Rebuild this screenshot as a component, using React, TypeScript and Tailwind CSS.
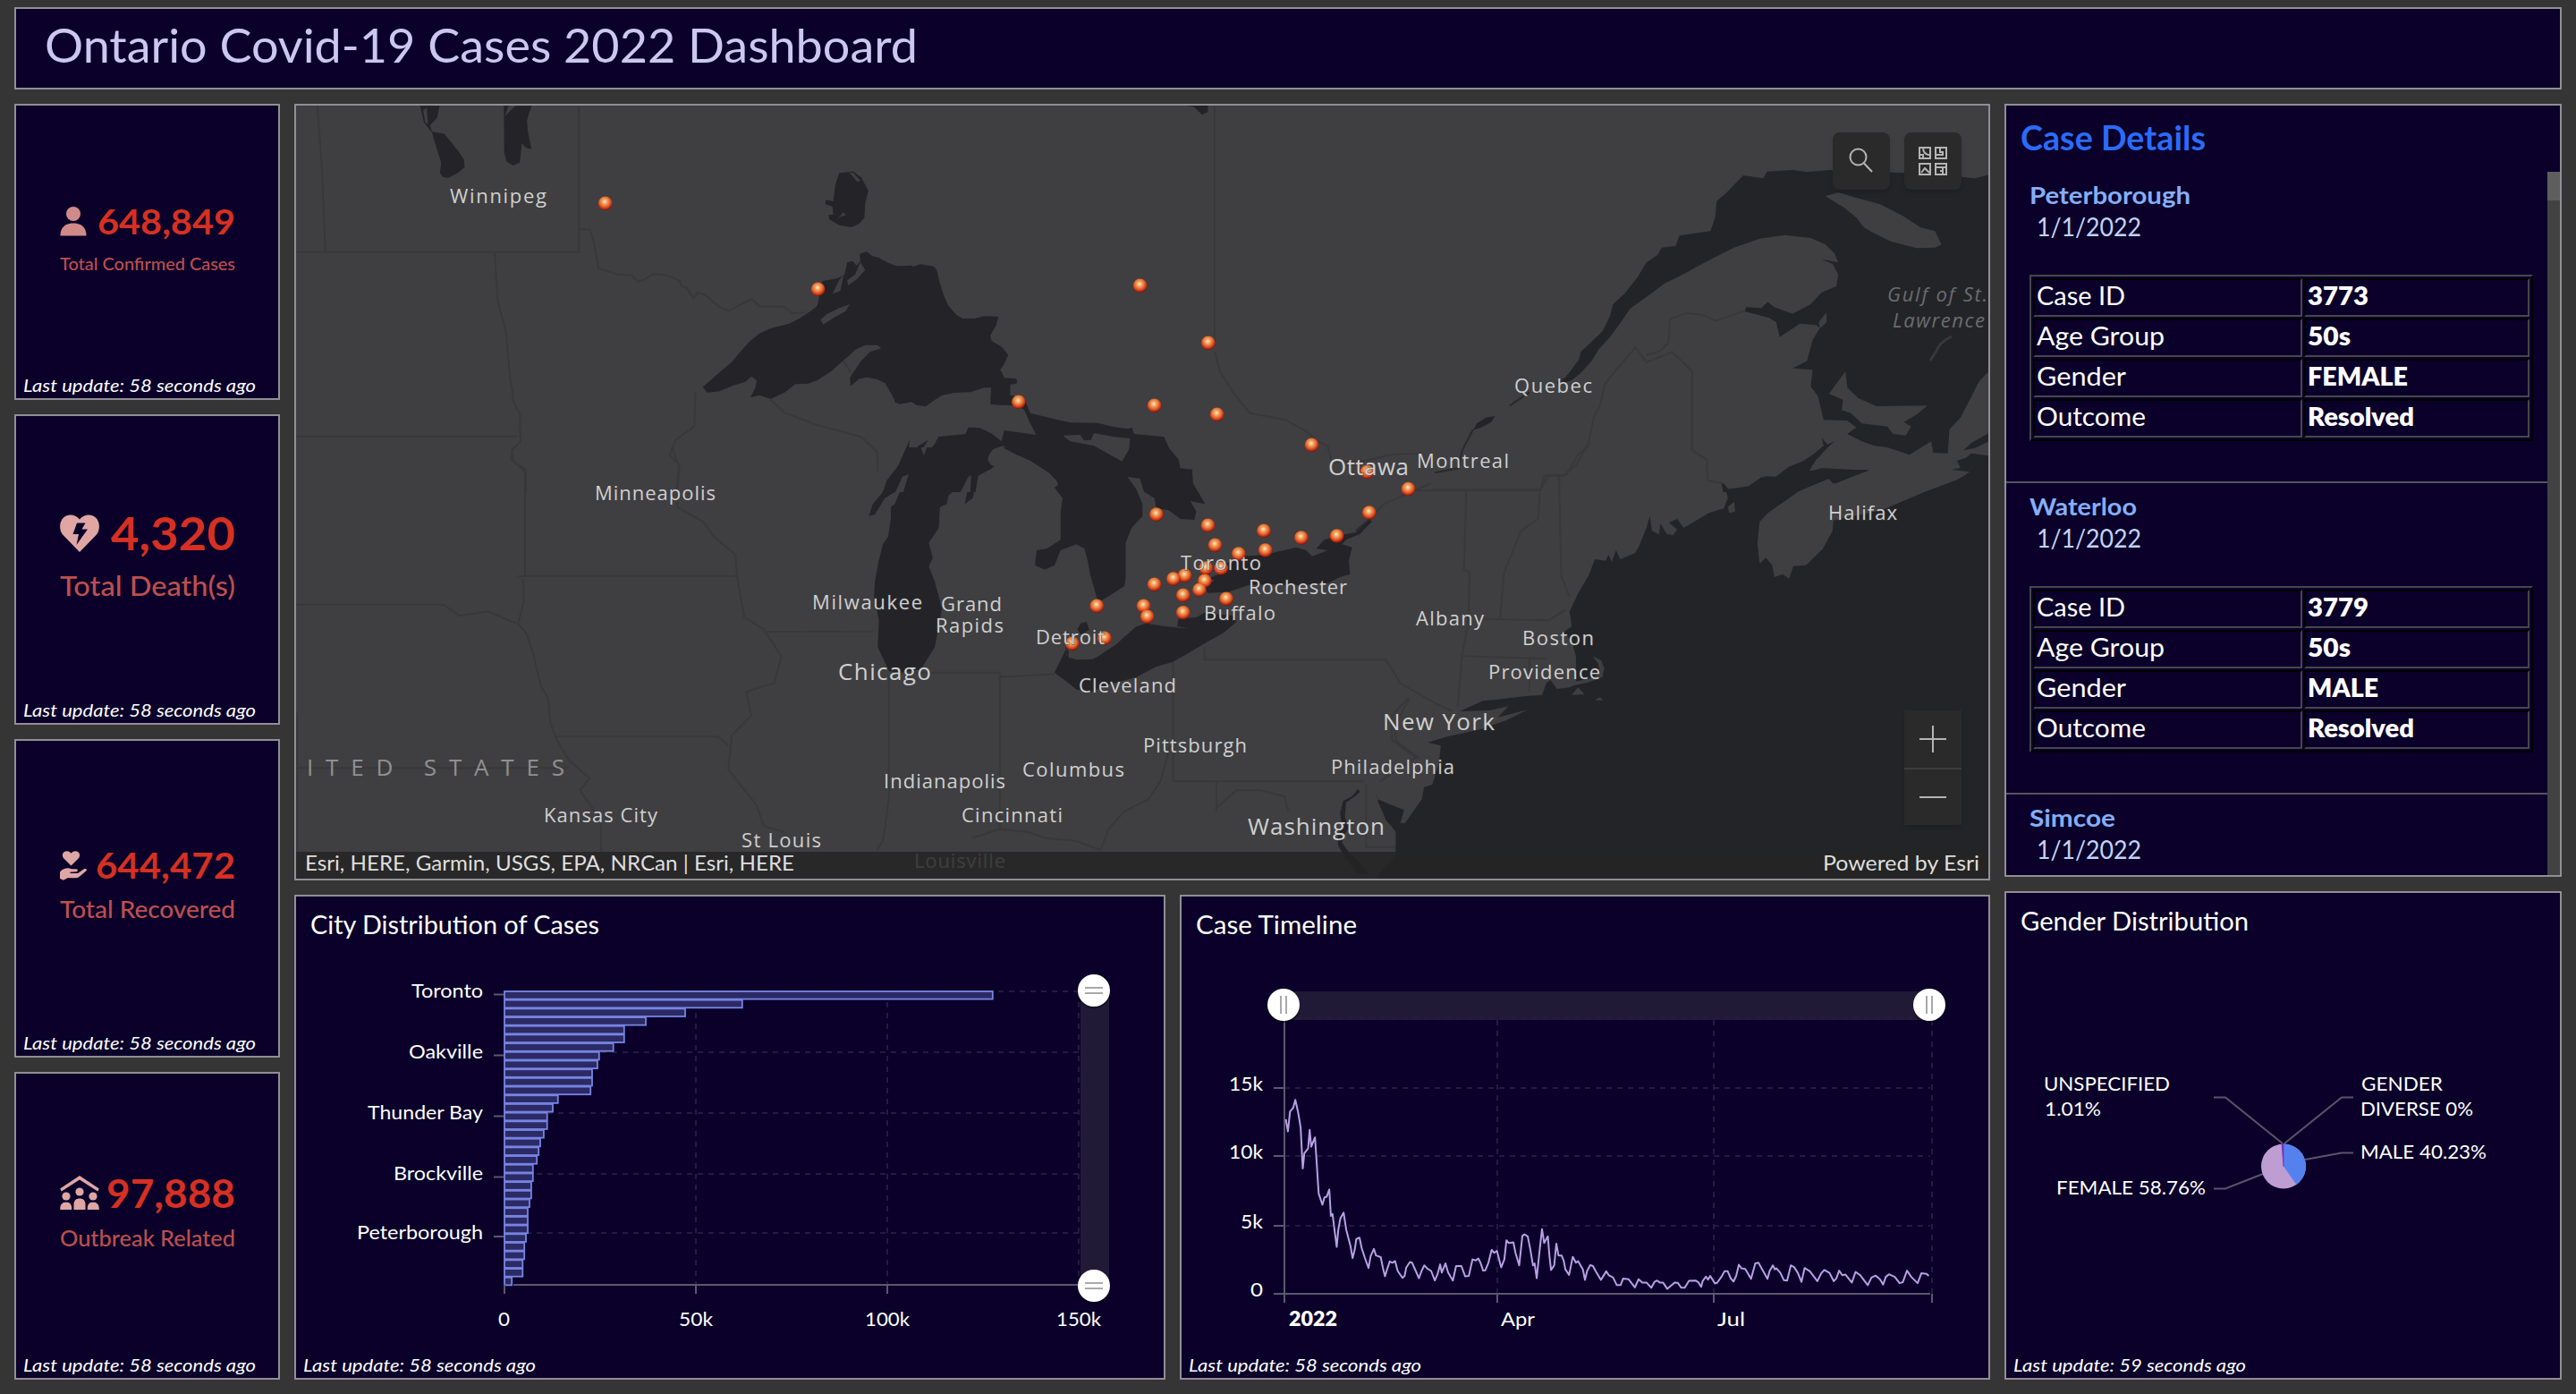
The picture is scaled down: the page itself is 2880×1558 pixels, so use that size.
import { useLayoutEffect, useRef } from "react";
import type { ReactNode } from "react";

/* ---------- text helpers ---------- */

/** A line of text widened or narrowed so that it spans `width` pixels. */
function FitText({ width, className = "", children }: { width: number; className?: string; children: string }) {
  const ref = useRef<HTMLSpanElement>(null);
  useLayoutEffect(() => {
    const el = ref.current;
    if (!el) return;
    el.style.transform = "none";
    const natural = el.getBoundingClientRect().width;
    el.style.transform = `scaleX(${width / natural})`;
  }, [width, children]);
  return (
    <span className="inline-block align-top whitespace-pre" style={{ width }}>
      <span ref={ref} className={`inline-block origin-left align-top ${className}`}>
        {children}
      </span>
    </span>
  );
}

function LastUpdate({ seconds, className = "" }: { seconds: number; className?: string }) {
  return (
    <div className={`mt-auto h-[27px] text-[20px] leading-6 text-white italic ${className}`}>
      <FitText width={260}>{`Last update: ${seconds} seconds ago`}</FitText>
    </div>
  );
}

function Panel({ className = "", children }: { className?: string; children: ReactNode }) {
  return (
    <section className={`flex flex-col overflow-hidden border-2 border-[#918e94] bg-[#0a002a] ${className}`}>
      {children}
    </section>
  );
}

/* ---------- indicators ---------- */

function PersonIcon() {
  return (
    <svg viewBox="0 0 30 33" className="h-[33px] w-[30px] fill-[#d08b88]">
      <circle cx="15" cy="8" r="8" />
      <path d="M0.5 32.5C0.5 23 6 18.5 15 18.5S29.500 23 29.500 32.500Z" />
    </svg>
  );
}

function BrokenHeartIcon() {
  return (
    <svg viewBox="0 0 44 42" className="h-[42px] w-[44px]">
      <path
        className="fill-[#dfa6a4]"
        d="M22 42L3.500 23C-1.300 17.500-.9 8 4 3.500C9-1.200 17-.6 22 5.500C27-.6 35-1.200 40 3.500C44.900 8 45.300 17.500 40.500 23Z"
      />
      <path className="fill-[#0a002a]" d="M19 9.500H28.500L24.500 16.500H31L18.500 34L21 22H14.500Z" />
    </svg>
  );
}

function HandHeartIcon() {
  return (
    <svg viewBox="0 0 30 33" className="h-[33px] w-[30px] fill-[#dfa6a4]">
      <path d="M12.500 16.500L4.400 8.600C2.300 6.300 2.500 2.800 4.600 1.200C7-.6 10.300-.1 12.500 2.600C14.700-.1 18-.6 20.400 1.200C22.500 2.800 22.700 6.300 20.600 8.600Z" />
      <path d="M0 23.500C4 19.500 8.500 18.300 13 20.200H18.500C20.300 20.400 20.200 22.900 18.500 23.200L11.500 23.800V25H20L26.500 20.500C28.500 19.300 30.800 20.500 29.500 22.300L21.500 29C20.300 30 19 30.300 17.500 30.300H8.500L4 32.800L0 31Z" />
    </svg>
  );
}

function PeopleRoofIcon() {
  return (
    <svg viewBox="0 0 44 38" className="h-[38px] w-11 fill-[#dfa6a4]">
      <path d="M22 0L43.800 14.500L42.300 17.500L22 4.600L1.700 17.500L.2 14.500Z" />
      <circle cx="7" cy="23" r="4.600" />
      <circle cx="22" cy="18" r="4.600" />
      <circle cx="37" cy="23" r="4.600" />
      <path d="M.3 38V35.500C.8 31.500 3 29.700 7 29.700S12.700 31.500 13.200 35.500V38ZM15.500 38V31.500C16 27.500 18 25.500 22 25.500S28 27.500 28.500 31.500V38ZM30.800 38V35.500C31.300 31.500 33 29.700 37 29.700S43.200 31.500 43.700 35.500V38Z" />
    </svg>
  );
}

const indicators = [
  {
    value: "648,849",
    label: "Total Confirmed Cases",
    valueWidth: 154,
    icon: <PersonIcon />,
    card: "h-[331px] pt-[109px]",
    valueClass: "text-[38px] leading-10",
    labelClass: "mt-4 text-[18.500px] leading-6",
  },
  {
    value: "4,320",
    label: "Total Death(s)",
    valueWidth: 139,
    icon: <BrokenHeartIcon />,
    card: "h-[347px] pt-[105px]",
    valueClass: "text-[51px] leading-[52px]",
    labelClass: "mt-3.5 text-[30px] leading-9",
  },
  {
    value: "644,472",
    label: "Total Recovered",
    valueWidth: 156,
    icon: <HandHeartIcon />,
    card: "h-[356px] pt-[117px]",
    valueClass: "text-[41px] leading-[44px]",
    labelClass: "mt-[11px] text-[27px] leading-8",
  },
  {
    value: "97,888",
    label: "Outbreak Related",
    valueWidth: 144,
    icon: <PeopleRoofIcon />,
    card: "h-[344px] pt-[109px]",
    valueClass: "text-[44px] leading-[48px]",
    labelClass: "mt-2.5 text-[25px] leading-8",
  },
];

function Indicators() {
  return (
    <div className="flex w-[297px] flex-col gap-4">
      {indicators.map((it) => (
        <Panel key={it.label} className={it.card}>
          <div className="ml-[49px] w-[196px]">
            <div className={`flex items-center justify-between font-bold text-[#d63022] ${it.valueClass}`}>
              {it.icon}
              <FitText width={it.valueWidth}>{it.value}</FitText>
            </div>
            <div className={`font-medium text-[#bd4f4f] ${it.labelClass}`}>
              <FitText width={196}>{it.label}</FitText>
            </div>
          </div>
          <LastUpdate seconds={58} className="pl-2" />
        </Panel>
      ))}
    </div>
  );
}

/* ---------- map ---------- */

const WEST = "translate(320 110) scale(.44643 .33333)";
const NORTH = "translate(1000 110) scale(.44643 .33333)";
const EAST = "translate(1600 110) scale(.40816 .33333)";
const LAKES = "translate(900 500) scale(.44643 .33333)";
const COAST = "translate(1500 500) scale(.47193 .33333)";
const PLAINS = "translate(320 500) scale(.39541 .33333)";

const water: { at: string; d: string; sea?: boolean }[] = [
  { at: WEST, d: "M335 25L345 80L365 115L375 160L388 215L385 250L392 263L405 267L430 250L447 230L445 205L430 175L415 150L395 118L365 112L360 90L378 65L384 25Z" },
  { at: WEST, d: "M545 25H615L608 50L603 75L605 110L614 170L600 165L590 150L585 215L568 225L552 212L546 180Z" },
  { at: WEST, d: "M1385 250L1420 245L1440 265L1458 310L1450 350L1448 400L1435 420L1415 432L1385 425L1360 405L1358 390L1370 390L1368 362L1350 355L1352 340L1370 345L1375 290Z" },
  { at: WEST, d: "M1043 968L1075 930L1115 885L1140 845L1160 815L1185 788L1215 770L1260 755L1285 738L1315 712L1330 695L1335 665L1320 645L1345 612L1382 603L1398 590L1405 550L1418 545L1428 560L1438 545L1436 522L1453 513L1467 528L1485 535L1505 550L1530 563L1568 560V1017L1550 1022L1527 1020L1515 990L1500 955L1480 942L1455 935L1435 940L1413 965L1412 935L1425 910L1440 880L1462 850L1490 838L1480 827L1450 827L1425 843L1410 862L1390 885L1365 915L1330 945L1305 957L1275 958L1250 985L1213 1008L1185 995L1162 1003L1175 970L1178 945L1165 932L1150 950L1120 962L1085 982L1055 986Z" },
  { at: NORTH, d: "M0 560L40 567L65 556L98 563L106 575L112 610L122 655L135 695L155 725L170 738L200 738L225 730L260 731L255 760L240 795L243 812L270 835L285 860L275 890L265 910L275 937L305 940L308 955L290 960L290 995L325 1005L340 1055L400 1075L440 1087L510 1088L545 1100L585 1108L595 1103L600 1125L675 1135L690 1180L710 1210L715 1240L735 1262L745 1240L748 1290L760 1320H625L615 1275L580 1268L595 1300L605 1320H420L405 1280L380 1245L335 1210L325 1190L270 1165L240 1180L233 1210L245 1240L210 1265L203 1320H-30L0 1260L38 1145L35 1200L60 1165L85 1145L70 1175L78 1195L100 1160L110 1135L140 1130L178 1125L185 1103L215 1105L245 1125L268 1150L275 1113L355 1128L340 1090L325 1045L310 1030L265 1028L240 1025L242 970L225 970L190 985L150 987L120 995L100 1012L78 1033L55 1028L40 1015L15 1025L0 1018Z" },
  { at: NORTH, d: "M718 22L750 28L770 55L785 45V22Z" },
  { at: LAKES, d: "M258 0L240 50L205 110L195 150L170 190L160 230L175 225L200 170L225 150L240 100L262 90L240 140L225 190L215 200V240L208 300L195 325L183 390L175 450L173 500L185 580L182 670L200 720L210 750L240 755L290 745L325 670L335 600L343 540L325 450L310 400L320 370L310 320L335 270L338 200L355 190L360 160L400 120L430 85L475 65L455 50L460 25L475 0Z" },
  { at: LAKES, d: "M418 85L426 130L420 170L400 190L408 140Z" },
  { at: LAKES, d: "M495 0L530 25L565 45L605 80L645 115L625 135L645 170L640 220V310L605 340L580 345L576 395L600 410L625 395L640 345L680 325L700 340L708 380L715 430L730 500L735 520L765 495L800 465L803 440V320L818 270L845 230V190L830 140L805 95L845 100L850 150L875 170L880 205L910 210L940 240L975 243L980 215L965 180L1002 190L985 150L965 125L970 75L940 70L935 40L910 0H820L800 45L760 35L700 0Z" },
  { at: LAKES, d: "M705 585L712 612L690 628L682 610L690 590Z" },
  { at: LAKES, d: "M652 680H660V705L680 712L720 710L735 700L780 660L800 635L830 600L855 590L900 600L965 608L932 600L935 575L980 570L1000 555L1075 565L1080 585L1050 620L1010 650L960 690L920 720L880 735L830 770L790 785L760 795L720 820L680 812L650 780L625 755Z" },
  { at: LAKES, d: "M1010 440L1035 425L1060 385L1100 365L1150 360L1200 345L1230 335L1255 345L1270 365L1310 345L1280 340L1300 310L1340 295L1380 285L1412 240L1420 248L1390 290L1355 310L1345 325L1370 335L1362 380L1365 425L1340 435L1310 455L1250 462L1150 460L1110 462L1060 485L1010 488L998 475L1025 445Z" },
  { at: LAKES, d: "M1385 1145L1390 1155L1378 1170L1355 1190L1352 1240L1362 1275L1350 1300L1345 1325L1358 1350L1385 1385L1410 1430H1385L1355 1380L1335 1335V1300L1345 1270L1340 1225L1348 1185L1370 1170Z" },
  { at: LAKES, d: "M1425 1145L1435 1180L1460 1195L1500 1215L1492 1255L1482 1290L1455 1250L1440 1200Z" },
  { at: EAST, sea: true, d: "M378 920L405 875L410 850L440 815L470 780L490 730L498 690L530 655L565 600L590 550L620 525L632 500L670 495L680 460L765 445L778 400L782 345L810 315L855 258L910 268L920 245L990 240L1030 247L1090 240L1300 250L1440 262L1490 268L1530 255V912L1500 950L1480 1000L1450 1070L1420 1110L1415 1190L1375 1188L1370 1150L1310 1195L1250 1170L1215 1165L1180 1150L1140 1125L1165 1103L1140 1080L1075 1078L1060 1000L1040 965L1045 910L990 905L1030 880L1045 810L1065 770L1055 760L1010 755L955 800L945 750L925 735L860 715L862 700L905 703L922 682L940 700L990 722L1040 690L1070 650L1110 630L1115 590L1100 555L1070 540L1115 550L1105 520L1080 490L1040 468L970 458L900 470L830 500L750 550L690 590L640 620L590 665L545 705L520 750L490 800L460 840L440 880L410 920L385 945L350 960Z" },
  { at: EAST, sea: true, d: "M800 1320L795 1288L815 1310L870 1300L905 1270L940 1272L980 1235L1020 1215L1050 1190L1075 1165L1070 1138L1085 1160L1105 1150L1060 1200L1035 1250L1070 1240L1200 1247L1160 1265L1110 1290L1090 1275L1040 1300L1000 1320Z" },
  { at: EAST, sea: true, d: "M1530 1198L1480 1190L1465 1205L1440 1215L1450 1238L1425 1245L1475 1252L1450 1275L1400 1300L1365 1320H1530Z" },
  { at: EAST, sea: true, d: "M1530 1120L1480 1155L1458 1180L1490 1172L1530 1148Z" },
  { at: EAST, d: "M115 1112L125 1090L150 1070L175 1065L165 1085L135 1105Z" },
  { at: COAST, sea: true, d: "M905 118L915 170L905 205L870 220L840 245L810 270L795 240L775 252L795 275L785 295L770 290L755 255L752 292L735 280L730 230L722 270L705 330L695 355L660 375L650 345L640 385L632 360L625 380L600 375L585 430L560 490L540 550L545 600L525 620L545 650L555 700V795L540 805L510 810L495 780L485 790L475 830L430 835L370 845L335 850L280 885L350 882L395 868L370 905L440 880L390 915L330 945L250 970L215 985L205 990L235 1000L230 1060L215 1130L195 1140L190 1180L150 1260L138 1260L143 1220L110 1205L85 1185L100 1230L128 1290V1370L100 1410L80 1450H1540V25L1490 85L1455 110L1380 150L1330 180L1280 210L1165 245L1163 280L1140 340L1100 395L1070 398L1060 440L1045 425L1025 435L1020 395L1005 370L990 390L985 320L990 250L1010 220L1080 150L1150 100L1165 122L1230 85L1250 76L1110 80L1105 65L1150 0L1130 35L1090 65L1050 100L1005 97L960 135L915 140Z" },
];

const islands: { at: string; d: string }[] = [
  { at: WEST, d: "M343 40L352 30L355 88L348 80Z" },
  { at: WEST, d: "M557 24H575L553 52L547 60Z" },
  { at: WEST, d: "M1410 248L1420 250L1438 275L1430 280Z" },
  { at: WEST, d: "M1338 742L1355 722L1385 703L1412 690L1400 715L1375 732L1345 758Z" },
  { at: WEST, d: "M1438 548L1450 575L1430 605L1407 627L1405 610L1425 590Z" },
  { at: WEST, d: "M1385 608L1396 590L1388 645L1368 655Z" },
  { at: WEST, d: "M1380 405L1395 382L1402 392L1390 395L1372 412Z" },
  { at: NORTH, d: "M422 1130L465 1128L475 1147L492 1145L500 1122L550 1135L590 1140L588 1175L570 1217L540 1195L500 1165L440 1150Z" },
  { at: NORTH, d: "M20 1268L36 1260L22 1320H2Z" },
  { at: NORTH, d: "M165 1320L185 1270L192 1262L190 1320Z" },
  { at: LAKES, d: "M290 0H305L298 28Z" },
  { at: EAST, d: "M1080 328L1115 315L1180 338L1230 355L1290 392L1340 432L1380 445L1398 490L1380 500L1330 502L1260 480L1210 450L1185 432L1165 400L1130 365Z" },
  { at: EAST, d: "M1135 915L1140 970L1170 1005L1220 1032L1360 1030L1330 1060L1295 1085L1315 1100L1300 1130L1265 1125L1250 1100L1180 1090L1150 1055L1125 1045L1128 1010L1090 990Z" },
  { at: EAST, d: "M1083 718V750L1065 772L1062 750Z" },
  { at: COAST, d: "M545 830L560 805L575 828Z" },
  { at: COAST, d: "M600 848L612 838L620 848Z" },
  { at: COAST, d: "M915 200L930 182L932 215L918 220Z" },
  { at: COAST, d: "M595 700L615 715L622 740L618 770L580 790L553 797V785L590 775L612 758L608 725Z" },
];

const borders: { at: string; d: string }[] = [
  { at: WEST, d: "M25 515H733V25M78 25L90 250L98 515M735 437L760 440L770 480L782 570L830 590L865 592L880 615L900 605L920 588L950 592L985 610L990 630L1003 635L1020 670L1030 650L1050 660L1085 700L1110 712L1140 690L1165 672L1185 697L1245 698L1268 720L1300 718" },
  { at: WEST, d: "M522 520L530 680L550 780L560 930L570 1020L585 1060L587 1150L565 1180L570 1220L600 1245V1320M25 1133H578M1025 985L1022 1100L975 1145L960 1195L985 1230L977 1320M1213 1010L1250 1055L1330 1095L1440 1135L1480 1185L1482 1250M1395 880L1415 920" },
  { at: NORTH, d: "M802 25V830M802 850L815 915L850 990L890 1055L980 1078L1030 1115L1060 1150L1085 1165L1095 1220L1180 1215L1240 1195L1320 1190" },
  { at: EAST, d: "M0 1312H300L310 1265L370 1262L400 1200L430 1165L445 1070L465 1020L475 960L500 920L560 835L590 885L660 850L715 915V1180L755 1210L758 1280L800 1292M590 860L625 848L650 820L655 740L700 720L740 725L780 745L860 712" },
  { at: COAST, d: "M180 145H470L490 95H525L555 60L580 0M295 145L290 410L303 420L300 580L285 700L275 870M470 150L465 240L425 280L385 420L375 575M515 95L520 430L540 500M335 575L490 580L530 545M280 700L485 708M445 705V820M160 840L125 940L130 985L180 1040" },
  { at: LAKES, d: "M0 617H170M230 755H488V1190M210 770V1180L195 1320L180 1350M488 770L625 760M922 720V1120H1400M1000 670V712H1455L1490 790L1568 850L1620 885M1030 1120V1220M1405 1130V1340H1480M915 1000L890 1120L860 1180L800 1220L760 1280L740 1350M488 1190V1280L420 1310M488 1280L560 1290L600 1310L680 1320L740 1350M1030 1210L1080 1150L1140 1150L1200 1170L1210 1220M1568 120L1450 190L1415 240M1510 840L1470 900V980L1530 1040L1440 1120" },
  { at: PLAINS, d: "M655 432H1275M675 80V430M640 0L635 40L675 80M670 440L672 520L655 590L680 625L700 700L720 800L740 840L748 930L765 980L800 1050L858 1110L830 1150L890 1250V1356M30 527H445L490 565L570 550L650 590M1090 0L1110 60L1105 200L1180 250L1210 300L1270 360L1275 430L1295 570L1350 610L1400 700L1380 790L1300 820L1315 900L1260 965L1250 1080L1330 1200L1350 1270L1410 1290M765 970H1220L1250 1000M1350 618H1568M30 1075H800M30 890V1356" },
];

const rivers: { at: string; d: string }[] = [
  { at: EAST, d: "M378 930L345 955M270 985L215 1030M115 1110L85 1180L75 1240L10 1255" },
  { at: LAKES, d: "M1415 240L1380 280" },
  { at: LAKES, d: "M655 650V700" },
];

const cases: [number, number][] = [
  [676.7, 227.3], [914.6, 323.3], [1274.6, 319.3], [1350.9, 383.3], [1138.8, 449.3], [1290.6, 453.3], [1360.700, 463.3],
  [1466.5, 497.3], [1528.6, 527.5], [1574.500, 546.5], [1292.900, 575], [1350.5, 587.3], [1358.5, 609.3], [1413, 593.3],
  [1454.9, 601], [1494.6, 599], [1530.800, 573], [1384.8, 619], [1414.7, 615], [1348.2, 635], [1365.2, 635],
  [1324.6, 643.3], [1312, 647], [1290.6, 653.3], [1346.900, 649.3], [1341, 659.3], [1322.8, 665.3], [1371, 669.3],
  [1322.8, 684.7], [1278.6, 677.3], [1282.6, 689.3], [1226.3, 677.3], [1234.8, 713.3], [1198.7, 719.3],
];

type Label = [text: string, x: number, end: number, y: number, size?: number];
const labels: Label[] = [
  ["Winnipeg", 503, 611, 227], ["Minneapolis", 665, 800, 559], ["Quebec", 1693, 1780, 439], ["Ottawa", 1485, 1575, 531, 26],
  ["Montreal", 1584, 1687, 523], ["Halifax", 2044, 2121, 581], ["Toronto", 1320, 1410, 637], ["Rochester", 1396, 1506, 664],
  ["Buffalo", 1346, 1426, 692.5], ["Milwaukee", 908, 1031, 680.5], ["Grand", 1052, 1120, 682.5], ["Rapids", 1046, 1122, 706.5],
  ["Detroit", 1158, 1235, 720], ["Chicago", 937, 1041, 760, 26], ["Cleveland", 1206, 1315, 774], ["Albany", 1583, 1659, 699],
  ["Boston", 1702, 1782, 720.5], ["Providence", 1664, 1789, 758.5], ["New York", 1546, 1671, 816, 26],
  ["Philadelphia", 1488, 1626, 865], ["Pittsburgh", 1278, 1394, 841], ["Columbus", 1143, 1257, 868],
  ["Indianapolis", 988, 1124, 881], ["Cincinnati", 1075, 1188, 919], ["Washington", 1395, 1548, 932.5, 26],
  ["St Louis", 829, 918, 946.5], ["Kansas City", 608, 735, 919], ["Louisville", 1022, 1124, 970],
];

function CaseMap() {
  return (
    <section className="relative h-[868px] w-[1896px] overflow-hidden border-2 border-[#918e94] bg-[#3f3f41]">
      <svg viewBox="331 118 1892 864" className="h-[864px] w-[1892px]">
        <defs>
          <radialGradient id="dot" cx="46%" cy="38%" r="62%">
            <stop offset="0" stopColor="#ffe9c4" />
            <stop offset=".25" stopColor="#f2ac70" />
            <stop offset=".55" stopColor="#e2702f" />
            <stop offset=".78" stopColor="#d0331a" />
            <stop offset="1" stopColor="#6e130c" />
          </radialGradient>
        </defs>
        {borders.map((b) => (
          <g key={b.d} transform={b.at} fill="none" strokeLinejoin="round">
            <path d={b.d} stroke="#38383a" strokeWidth="2" vectorEffect="non-scaling-stroke" />
          </g>
        ))}
        {water.map((w) => (
          <path key={w.d} d={w.d} transform={w.at} fill={w.sea ? "#232427" : "#242327"} strokeLinejoin="round" />
        ))}
        {rivers.map((r) => (
          <path key={r.d} d={r.d} transform={r.at} fill="none" stroke="#2a2a2d" strokeWidth="2" vectorEffect="non-scaling-stroke" />
        ))}
        {islands.map((i) => (
          <path key={i.d} d={i.d} transform={i.at} fill="#3f3f41" />
        ))}
        <path d="M2182 376Q2168 383 2165 392L2158 403" fill="none" stroke="#37383a" strokeWidth="3" />
        {cases.map(([x, y]) => (
          <circle key={`${x}-${y}`} cx={x} cy={y} r="7.800" fill="url(#dot)" />
        ))}
        <g className="font-['Open_Sans'] [paint-order:stroke]" fill="#cfcfd0" stroke="#3f3f41" strokeOpacity=".55" strokeWidth="1.5">
          {labels.map(([text, x, end, y, size = 22]) => (
            <text key={text} x={x} y={y} fontSize={size} textLength={end - x}>
              {text}
            </text>
          ))}
        </g>
        <text x="343" y="866.500" fontSize="26" textLength="288" fill="#909092" className="font-['Open_Sans']">
          ITED STATES
        </text>
        <g className="font-['Open_Sans'] italic" fill="#6b6c6f" fontSize="22">
          <text x="2110" y="337" textLength="112">Gulf of St.</text>
          <text x="2116" y="366" textLength="103">Lawrence</text>
        </g>
      </svg>

      <div className="absolute top-[30px] right-[30px] flex gap-4">
        <button className="flex size-16 items-center justify-center rounded-lg bg-[#2a2a2a] shadow-md">
          <svg viewBox="0 0 32 32" className="size-8" fill="none" stroke="#b4b4b4" strokeWidth="2">
            <circle cx="12.500" cy="11.500" r="9" />
            <path d="M19 18.500L28 28" />
          </svg>
        </button>
        <button className="flex size-16 items-center justify-center rounded-lg bg-[#2a2a2a] shadow-md">
          <svg viewBox="0 0 32 32" className="size-8" fill="none" stroke="#b4b4b4" strokeWidth="2">
            <path d="M1 1H13V13H1ZM19 1H31V13H19ZM1 19H13V31H1ZM19 19H31V31H19Z" />
            <path d="M5 1C5 6 8 9 13 9.500M1 9H5V13M24 1V6H28M19 9H27V5M3 29L7 24L12 29M19 23H31M27 23V31M24 27H27" />
          </svg>
        </button>
      </div>

      <div className="absolute right-[30px] bottom-[60px] flex w-16 flex-col bg-[#2a2a2a] shadow-md">
        <button className="flex h-[66px] items-center justify-center border-b-2 border-[#3d3d3d]">
          <svg viewBox="0 0 30 30" className="size-[30px]" stroke="#b4b4b4" strokeWidth="2">
            <path d="M0 15H30M15 0V30" />
          </svg>
        </button>
        <button className="flex h-[62px] items-center justify-center">
          <svg viewBox="0 0 30 2" className="h-0.5 w-[30px]" stroke="#b4b4b4" strokeWidth="2">
            <path d="M0 1H30" />
          </svg>
        </button>
      </div>

      <div className="absolute inset-x-0 bottom-0 flex h-[30px] justify-between bg-[#242424]/85 px-2.5 text-[24px] leading-6 text-[#dedede]">
        <FitText width={547}>Esri, HERE, Garmin, USGS, EPA, NRCan | Esri, HERE</FitText>
        <FitText width={175}>Powered by Esri</FitText>
      </div>
    </section>
  );
}

/* ---------- case details ---------- */

const records = [
  { city: "Peterborough", w: 180, rows: [["Case ID", "3773", 99, 68], ["Age Group", "50s", 143, 48], ["Gender", "FEMALE", 100, 112], ["Outcome", "Resolved", 122, 119]] },
  { city: "Waterloo", w: 120, rows: [["Case ID", "3779", 99, 68], ["Age Group", "50s", 143, 48], ["Gender", "MALE", 100, 79], ["Outcome", "Resolved", 122, 119]] },
  { city: "Simcoe", w: 96, rows: [] },
] as { city: string; w: number; rows: [string, string, number, number][] }[];

function CaseDetails() {
  return (
    <Panel className="h-[864px]">
      <h2 className="h-[74px] shrink-0 pt-3 pl-4 text-[38px] leading-[46px] font-bold text-[#2b6bf8]">
        <FitText width={207}>Case Details</FitText>
      </h2>
      <div className="flex min-h-0 flex-1 overflow-hidden">
        <div className="flex-1">
          {records.map((r) => (
            <article key={r.city} className="h-[348px] border-b-2 border-[#56535c] pt-[9px] pl-[26px]">
              <h3 className="h-[34px] text-[27px] leading-[34px] font-bold text-[#85aef8]">
                <FitText width={r.w}>{r.city}</FitText>
              </h3>
              <p className="mt-px h-[34px] pl-2 text-[28px] leading-[34px] text-[#c3d2f8]">
                <FitText width={117}>1/1/2022</FitText>
              </p>
              {r.rows.length > 0 && (
                <div className="mt-[37px] flex w-[563px] flex-col gap-0.5 border-2 border-t-[#48464c] border-r-black border-b-black border-l-[#48464c] p-0.5">
                  {r.rows.map(([k, v, kw, vw]) => (
                    <div key={k} className="flex h-[43px] gap-0.5 text-[28px] leading-[35px] text-white">
                      <div className="w-[301px] border-2 border-t-black border-r-[#48464c] border-b-[#48464c] border-l-black pl-0.5">
                        <FitText width={kw}>{k}</FitText>
                      </div>
                      <div className="flex-1 border-2 border-t-black border-r-[#48464c] border-b-[#48464c] border-l-black pl-0.5 font-extrabold">
                        <FitText width={vw}>{v}</FitText>
                      </div>
                    </div>
                  ))}
                </div>
              )}
            </article>
          ))}
        </div>
        <div className="w-3.5 bg-[#424242]">
          <div className="h-8 bg-[#5e5e5e]" />
        </div>
      </div>
    </Panel>
  );
}

/* ---------- charts ---------- */

function ChartTitle({ width, children }: { width: number; children: string }) {
  return (
    <h2 className="h-12 pt-3.5 pl-4 text-[28px] leading-[34px] text-white">
      <FitText width={width}>{children}</FitText>
    </h2>
  );
}

const barEnds = [
  1110.8, 830.8, 767, 723, 698.8, 698.8, 686.7, 670.8, 668.9, 663, 663, 661.2, 624.8, 619, 612.7, 612.7, 608.900, 605, 603.2,
  601.2, 596.8, 596.8, 594.900, 594.900, 593, 591, 591, 591, 589, 587.2, 587.2, 585.3, 585.3, 573.2,
];
const cityTicks: [string, number, number, number][] = [
  ["Toronto", 460, 1114.5, 1111.5], ["Oakville", 457, 1182.500, 1179.5], ["Thunder Bay", 411, 1250.5, 1247.500],
  ["Brockville", 440, 1318.5, 1315.5], ["Peterborough", 399, 1384.5, 1382],
];
const valueTicks: [string, number, number][] = [["0", 557, 13], ["50k", 759, 38], ["100k", 967, 50], ["150k", 1181, 50]];

function Handle({ x, y, vertical = false }: { x: number; y: number; vertical?: boolean }) {
  return (
    <g>
      <circle cx={x} cy={y + 2} r="18.500" fill="#000" opacity=".35" />
      <circle cx={x} cy={y} r="18" fill="#fff" />
      <path
        d={vertical ? `M${x - 3} ${y - 10}v20M${x + 3} ${y - 10}v20` : `M${x - 10} ${y - 3}h20M${x - 10} ${y + 3}h20`}
        stroke="#a9a9a9"
        strokeWidth="2"
      />
    </g>
  );
}

function CityChart() {
  return (
    <Panel className="h-[542px] w-[974px]">
      <ChartTitle width={323}>City Distribution of Cases</ChartTitle>
      <svg viewBox="331 1050 970 463" className="h-[463px] w-[970px]">
        <g stroke="#231b40" strokeWidth="2">
          {[1108, 1176, 1244, 1312, 1378].map((y) => (
            <path key={y} d={`M564 ${y}H1206`} strokeDasharray="6 6" />
          ))}
          {[778, 992, 1206].map((x) => (
            <path key={x} d={`M${x} 1108V1436`} strokeDasharray="6 6" />
          ))}
        </g>
        <rect x="1208" y="1107" width="32" height="330" fill="#211a37" />
        <g fill="#2c2a64" stroke="#7784e2" strokeWidth="1.800">
          {barEnds.map((end, i) => (
            <rect key={i} x="564" y={1108 + i * 9.69} width={end - 565} height="8.600" />
          ))}
        </g>
        <g stroke="#5d576d" strokeWidth="2" fill="none">
          <path d="M574 1436H1208M564 1436V1446M778 1436V1446M992 1436V1446" />
          {cityTicks.map(([name, , , t]) => (
            <path key={name} d={`M552 ${t}H563`} />
          ))}
        </g>
        <g fill="#fff" fontSize="22">
          {cityTicks.map(([name, x, y]) => (
            <text key={name} x={x} y={y} textLength={540 - x} lengthAdjust="spacingAndGlyphs">{name}</text>
          ))}
          {valueTicks.map(([name, x, w]) => (
            <text key={name} x={x} y="1481.500" textLength={w} lengthAdjust="spacingAndGlyphs">{name}</text>
          ))}
        </g>
        <Handle x={1223} y={1107} />
        <Handle x={1223} y={1437} />
      </svg>
      <LastUpdate seconds={58} className="pl-2" />
    </Panel>
  );
}

const timeline =
  "215,735 219,772 223,712 229,700 233,676 238,712 243,760 247,884 250,838 257,824 260,767 263,818 270,790 273,860 277,960 284,994 288,972 292,970 297,948 300,1028 303,1022 311,1122 314,1070 318,1035 324,1018 329,1070 337,1120 341,1156 345,1130 348,1098 354,1094 358,1125 364,1155 371,1186 375,1150 381,1128 385,1148 394,1153 398,1185 402,1211 407,1185 411,1166 416,1170 421,1165 426,1195 435,1216 439,1210 442,1185 449,1168 453,1170 460,1195 466,1217 471,1195 476,1178 482,1188 489,1195 496,1224 501,1205 506,1175 509,1200 516,1172 521,1200 530,1224 536,1180 546,1180 553,1211 560,1210 567,1160 573,1163 578,1157 582,1170 587,1194 591,1193 597,1170 603,1131 608,1140 613,1134 621,1184 627,1160 631,1102 635,1110 644,1108 648,1140 655,1178 661,1088 665,1084 671,1090 676,1130 681,1178 684,1172 688,1217 693,1140 698,1068 702,1110 709,1090 712,1150 715,1192 721,1178 725,1112 729,1148 735,1148 739,1165 742,1190 749,1207 756,1152 762,1170 766,1165 775,1190 779,1222 783,1195 789,1177 794,1180 799,1195 809,1222 819,1196 824,1208 832,1215 839,1238 846,1238 851,1218 861,1220 873,1245 880,1220 887,1230 895,1230 904,1246 910,1228 915,1224 920,1230 926,1230 934,1249 948,1230 954,1231 960,1245 967,1246 975,1225 988,1224 993,1230 998,1243 1001,1225 1007,1212 1011,1221 1015,1210 1024,1233 1028,1231 1036,1213 1042,1196 1048,1196 1054,1218 1059,1227 1064,1210 1069,1176 1074,1187 1081,1189 1092,1219 1100,1172 1106,1170 1113,1190 1123,1219 1127,1195 1133,1178 1137,1190 1140,1187 1147,1200 1154,1223 1160,1224 1167,1178 1173,1183 1180,1200 1187,1228 1193,1186 1203,1196 1217,1226 1224,1203 1230,1192 1240,1201 1248,1226 1253,1217 1258,1194 1264,1208 1270,1206 1282,1230 1289,1198 1298,1208 1312,1238 1319,1215 1327,1209 1335,1220 1341,1236 1346,1213 1352,1205 1363,1213 1372,1232 1378,1229 1386,1194 1394,1213 1406,1232 1413,1202 1423,1204 1427,1210";

function TimelineChart() {
  return (
    <Panel className="h-[542px] w-[906px]">
      <ChartTitle width={180}>Case Timeline</ChartTitle>
      <svg viewBox="1321 1050 902 463" className="h-[463px] w-[902px]">
        <rect x="1435" y="1108" width="722" height="32" fill="#211a37" />
        <g stroke="#231b40" strokeWidth="2" strokeDasharray="6 6">
          {[1138, 1216, 1292, 1370].map((y) => (
            <path key={y} d={`M1436 ${y}H2158`} />
          ))}
          {[1674, 1916, 2160].map((x) => (
            <path key={x} d={`M${x} 1140V1446`} />
          ))}
        </g>
        <path
          d="M1436 1138V1456M1424 1446H2158M1424 1216H1436M1424 1292H1436M1424 1370H1436M1674 1446V1456M1916 1446V1456M2160 1446V1456"
          stroke="#5d576d"
          strokeWidth="2"
          fill="none"
        />
        <g transform="translate(1310 980) scale(.59312 .36862)">
          <polyline points={timeline} fill="none" stroke="#b9a0e4" strokeWidth="2" strokeLinejoin="round" vectorEffect="non-scaling-stroke" />
        </g>
        <g fill="#fff" fontSize="22">
          <text x="1374" y="1218.500" textLength="38" lengthAdjust="spacingAndGlyphs">15k</text>
          <text x="1374" y="1294.500" textLength="38" lengthAdjust="spacingAndGlyphs">10k</text>
          <text x="1387" y="1372.500" textLength="25" lengthAdjust="spacingAndGlyphs">5k</text>
          <text x="1398" y="1448.500" textLength="14" lengthAdjust="spacingAndGlyphs">0</text>
          <text x="1441" y="1481.500" textLength="54" lengthAdjust="spacingAndGlyphs" fontWeight="800">2022</text>
          <text x="1678" y="1481.500" textLength="38" lengthAdjust="spacingAndGlyphs">Apr</text>
          <text x="1920" y="1481.500" textLength="31" lengthAdjust="spacingAndGlyphs">Jul</text>
        </g>
        <Handle x={1435} y={1123} vertical />
        <Handle x={2157} y={1123} vertical />
      </svg>
      <LastUpdate seconds={58} className="pl-2" />
    </Panel>
  );
}

function GenderChart() {
  return (
    <Panel className="h-[546px]">
      <ChartTitle width={255}>Gender Distribution</ChartTitle>
      <svg viewBox="2243 1046 619 467" className="h-[467px] w-[619px]">
        <g stroke="#5a5468" strokeWidth="2" fill="none">
          <path d="M2475 1226.500H2488L2552 1278M2631 1226.500H2618L2554 1278M2631 1288.500H2618L2577 1296M2475 1328.500H2488L2530 1312" />
        </g>
        <circle cx="2553" cy="1303.500" r="25" fill="#be9dd2" />
        <path d="M2553 1303.500V1278.500A25 25 0 0 1 2567.400 1323.900Z" fill="#5581ee" />
        <path d="M2553 1303.500V1278.500A25 25 0 0 0 2551 1278.600Z" fill="#6f2cc0" stroke="#6f2cc0" strokeWidth=".6" />
        <g fill="#fff" fontSize="22">
          <text x="2285" y="1219" textLength="141" lengthAdjust="spacingAndGlyphs">UNSPECIFIED</text>
          <text x="2286" y="1247" textLength="63" lengthAdjust="spacingAndGlyphs">1.01%</text>
          <text x="2640" y="1219" textLength="91" lengthAdjust="spacingAndGlyphs">GENDER</text>
          <text x="2639" y="1247" textLength="126" lengthAdjust="spacingAndGlyphs">DIVERSE 0%</text>
          <text x="2639" y="1295" textLength="141" lengthAdjust="spacingAndGlyphs">MALE 40.23%</text>
          <text x="2299" y="1335" textLength="167" lengthAdjust="spacingAndGlyphs">FEMALE 58.76%</text>
        </g>
      </svg>
      <LastUpdate seconds={59} className="pl-2" />
    </Panel>
  );
}

export default function App() {
  return (
    <main className="flex h-[1558px] w-[2880px] flex-col gap-4 overflow-hidden bg-[#353535] px-4 pt-2 font-['Lato',sans-serif]">
      <header className="h-[92px] w-[2848px] shrink-0 border-2 border-[#918e94] bg-[#0a002a] pt-3 pl-8">
        <h1 className="text-[52px] leading-[56px] text-[#cbc7f1]">
          <FitText width={976}>Ontario Covid-19 Cases 2022 Dashboard</FitText>
        </h1>
      </header>
      <div className="flex gap-4">
        <Indicators />
        <div className="flex w-[1896px] flex-col gap-4">
          <CaseMap />
          <div className="flex gap-4">
            <CityChart />
            <TimelineChart />
          </div>
        </div>
        <div className="flex w-[623px] flex-col gap-4">
          <CaseDetails />
          <GenderChart />
        </div>
      </div>
    </main>
  );
}
